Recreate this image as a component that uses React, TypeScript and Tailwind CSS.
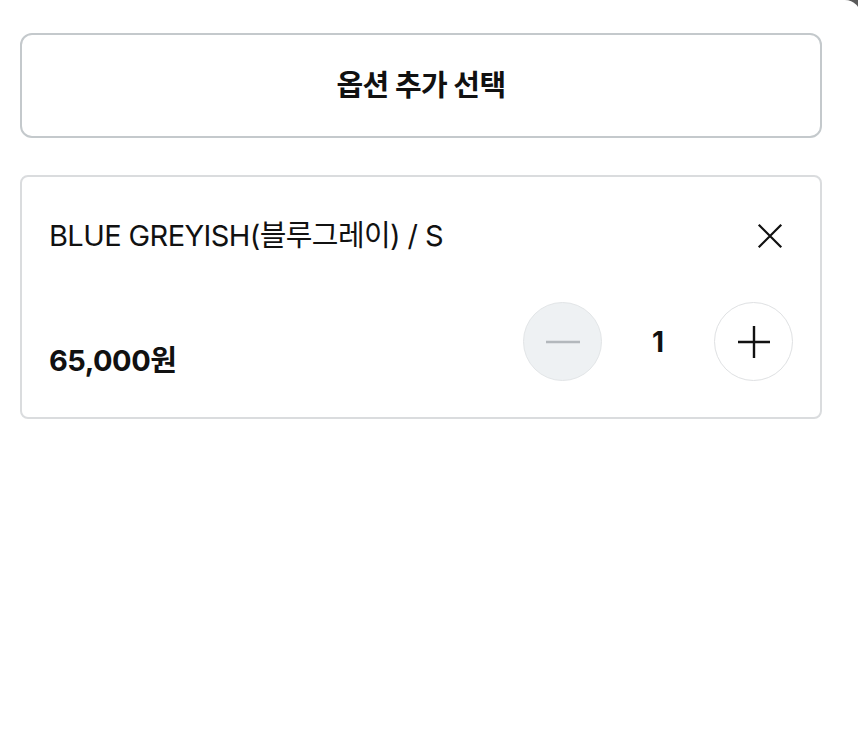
import { useState } from 'react';

const font = { fontFamily: 'Inter, "Noto Sans CJK KR", "Noto Sans", sans-serif' };

export default function App() {
  const [qty, setQty] = useState(1);

  return (
    <div className="w-full h-[750px] overflow-hidden bg-[#5a5a5a]" style={font}>
      <div className="h-full mr-[-3px] bg-white rounded-tr-[16px] pl-[20px] pr-[39px] pt-[33px]">
        {/* Add option button */}
        <button className="w-full h-[105px] border-2 border-[#c4c9cc] rounded-[12px] bg-white flex items-center justify-center">
          <span className="text-[29px] font-bold text-[#111] tracking-[-0.6px]">옵션 추가 선택</span>
        </button>

        {/* Selected option card */}
        <div className="mt-[37px] border-2 border-[#dadcde] rounded-[8px] pl-[27px] pr-[27px] pt-[41px] pb-[36px]">
          <div className="flex items-center justify-between h-[36px]">
            <span className="text-[29px] text-[#111] tracking-[-0.6px]">BLUE GREYISH(블루그레이) / S</span>
            <button className="w-[36px] h-[36px] flex items-center justify-center mr-[5px]">
              <svg viewBox="0 0 24 24" className="w-[30px] h-[30px]" fill="none" stroke="#111" strokeWidth={1.8}>
                <path d="M3 3l18 18M21 3L3 21" />
              </svg>
            </button>
          </div>

          <div className="mt-[48px] flex items-end justify-between">
            <span className="text-[29px] font-bold text-[#111] leading-[36px] mb-[2px] tracking-[-0.5px]">65,000원</span>
            <div className="flex items-center">
              <button
                onClick={() => setQty(q => Math.max(1, q - 1))}
                className="w-[79px] h-[79px] rounded-full bg-[#eef1f3] border border-[#e2e5e7] flex items-center justify-center"
              >
                <svg viewBox="0 0 34 4" className="w-[34px] h-[4px]">
                  <path d="M0 2h34" stroke="#b3b8bc" strokeWidth={2.5} />
                </svg>
              </button>
              <span className="w-[112px] text-center text-[28px] font-bold text-[#111]">{qty}</span>
              <button
                onClick={() => setQty(q => q + 1)}
                className="w-[79px] h-[79px] rounded-full bg-white border border-[#dfe1e3] flex items-center justify-center"
              >
                <svg viewBox="0 0 32 32" className="w-[32px] h-[32px]" fill="none" stroke="#111" strokeWidth={2.4}>
                  <path d="M16 0v32M0 16h32" />
                </svg>
              </button>
            </div>
          </div>
        </div>
      </div>
    </div>
  );
}
